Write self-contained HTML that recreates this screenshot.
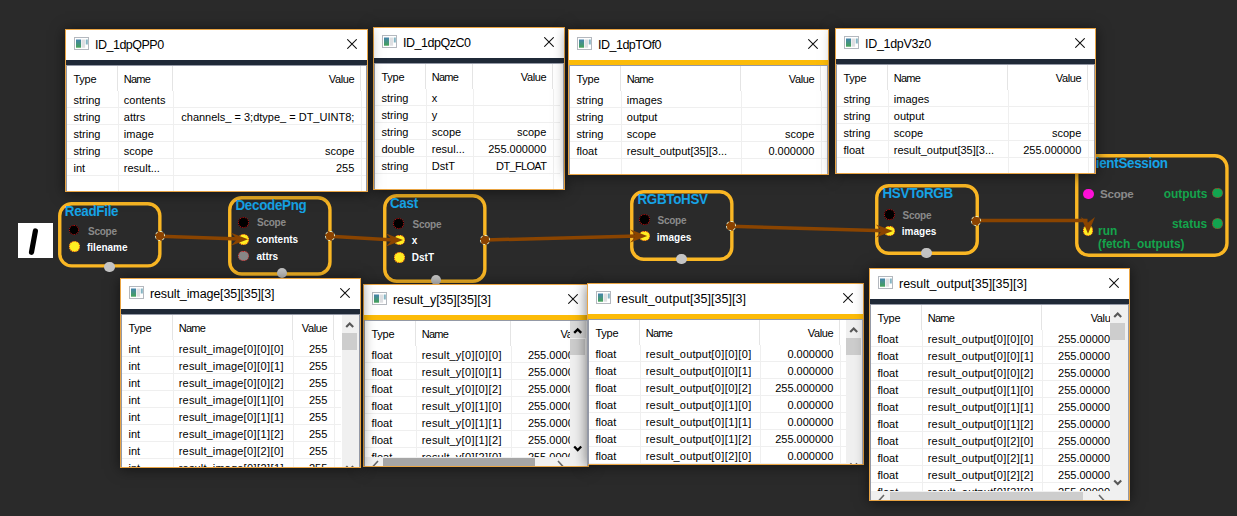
<!DOCTYPE html>
<html><head><meta charset="utf-8"><title>graph</title><style>
html,body{margin:0;padding:0;}
body{width:1237px;height:516px;background:#2a2a2a;overflow:hidden;position:relative;font-family:"Liberation Sans",sans-serif;}
.win{position:absolute;background:#fff;border:1px solid #e9a443;box-sizing:border-box;overflow:hidden;box-shadow:0 1px 13px rgba(0,0,0,0.55);}
.tb{position:absolute;left:0;top:0;right:0;height:30px;background:#fff;}
.ttl{position:absolute;left:29px;top:7.5px;font-size:12.5px;color:#000;white-space:nowrap;letter-spacing:-0.5px;}
.ico{position:absolute;left:8px;top:7px;width:15px;height:13px;}
.cls{position:absolute;right:10px;top:9px;width:10px;height:10px;}
.bar{position:absolute;left:0;right:0;top:30px;height:5px;}
.dk{background:#1f2937;}
.yl{background:#fcbb08;}
.tbl{position:absolute;left:0;top:35px;right:0;bottom:0;background:#fff;overflow:hidden;border-left:1px solid #9499a6;}
.vp{position:absolute;left:0;top:0;overflow:hidden;}
.c{position:absolute;font-size:11px;color:#000;white-space:nowrap;line-height:13px;}
.hl{position:absolute;height:1px;background:#efefef;left:0;}
.vl{position:absolute;width:1px;background:#efefef;}
.hv{position:absolute;width:1px;background:#e4e4e4;top:0;}
.sb{position:absolute;background:#f0f0f0;}
.th{position:absolute;background:#cdcdcd;}
.nt{position:absolute;font-weight:bold;font-size:13.4px;letter-spacing:-0.3px;color:#16a3e6;white-space:nowrap;line-height:15px;transform:scaleY(1.07);transform-origin:0 12.3px;}
.pl{position:absolute;font-weight:bold;font-size:10px;white-space:nowrap;line-height:12px;}
.pw{color:#fff;text-shadow:0 0 1px #123;}
.pg{color:#8a8a8a;letter-spacing:-0.25px;}
.gr{color:#14a44c;font-size:11.9px;line-height:13.4px;}
.dot{position:absolute;border-radius:50%;box-sizing:border-box;}
.d-k{background:#000;border:1px dotted #d01010;}
.d-y{background:#ffee22;border:1px dotted #e03a10;}
.d-g{background:#868686;border:1px dotted #d02020;}
.d-o{background:#8a4200;border:1.2px dashed #e4f0cc;}
.d-b{background:#c4c4c4;}
.d-m{background:#ff10d8;}
.d-gr{background:#12a550;border:1px dotted #b03020;}
</style></head><body>
<div style="position:absolute;left:18px;top:223px;width:35px;height:35px;background:#fff;"></div><svg style="position:absolute;left:18px;top:223px;" width="35" height="35"><path d="M17.4 8 L13.5 29.3" stroke="#000" stroke-width="5.2" stroke-linecap="round" fill="none"/></svg>
<svg style="position:absolute;left:1075.3px;top:154px;" width="153.70000000000005" height="103"><rect x="1.75" y="1.75" width="150.20000000000005" height="99.5" rx="12" ry="12" fill="none" stroke="#fab724" stroke-width="3.4"/></svg><div class="nt" style="left:1083px;top:156.20000000000002px;">ClientSession</div><div class="dot d-m" style="left:1083.2px;top:188.5px;width:10.6px;height:10.6px;"></div><div class="pl pg" style="font-size:11.6px;left:1100px;top:187px;line-height:14px;">Scope</div><div class="dot d-y" style="left:1082.8px;top:225.39999999999998px;width:10.6px;height:10.6px;"></div><div class="pl gr" style="left:1098px;top:224.9px;">run<br>(fetch_outputs)</div><div class="pl gr" style="left:1163.8px;top:187.7px;">outputs</div><div class="dot d-gr" style="left:1212.0px;top:187.79999999999998px;width:10.6px;height:10.6px;"></div><div class="pl gr" style="left:1172px;top:217.7px;">status</div><div class="dot d-gr" style="left:1212.0px;top:218.39999999999998px;width:10.6px;height:10.6px;"></div>
<svg style="position:absolute;left:58.4px;top:202.4px;" width="103.6" height="65.6"><rect x="1.75" y="1.75" width="100.1" height="62.099999999999994" rx="12" ry="12" fill="none" stroke="#fab724" stroke-width="3.4"/></svg><div class="nt" style="left:64.8px;top:203.9px;">ReadFile</div><div class="dot d-k" style="left:68.65px;top:224.65px;width:10.7px;height:10.7px;"></div><div class="pl pg" style="left:88px;top:225.6px;">Scope</div><div class="dot d-y" style="left:68.95px;top:241.45000000000002px;width:10.7px;height:10.7px;"></div><div class="pl pw" style="left:87px;top:241.9px;">filename</div><div class="dot d-b" style="left:104.3px;top:261.6px;width:10.4px;height:10.4px;"></div>
<svg style="position:absolute;left:228.3px;top:196.3px;" width="103.69999999999999" height="79.69999999999999"><rect x="1.75" y="1.75" width="100.19999999999999" height="76.19999999999999" rx="12" ry="12" fill="none" stroke="#fab724" stroke-width="3.4"/></svg><div class="nt" style="left:235.5px;top:198.0px;">DecodePng</div><div class="dot d-k" style="left:238.35px;top:217.05px;width:10.7px;height:10.7px;"></div><div class="pl pg" style="left:257px;top:217.29999999999998px;">Scope</div><div class="dot d-y" style="left:238.35px;top:233.85px;width:10.7px;height:10.7px;"></div><div class="pl pw" style="left:256.5px;top:234.1px;">contents</div><div class="dot d-g" style="left:238.35px;top:250.65px;width:10.7px;height:10.7px;"></div><div class="pl pw" style="left:256.5px;top:250.7px;">attrs</div><div class="dot d-b" style="left:276.6px;top:267.8px;width:10.4px;height:10.4px;"></div>
<svg style="position:absolute;left:383.4px;top:194px;" width="103.60000000000002" height="89"><rect x="1.75" y="1.75" width="100.10000000000002" height="85.5" rx="12" ry="12" fill="none" stroke="#fab724" stroke-width="3.4"/></svg><div class="nt" style="left:390px;top:195.9px;">Cast</div><div class="dot d-k" style="left:393.45px;top:217.85px;width:10.7px;height:10.7px;"></div><div class="pl pg" style="left:412.5px;top:218.7px;">Scope</div><div class="dot d-y" style="left:393.95px;top:234.65px;width:10.7px;height:10.7px;"></div><div class="pl pw" style="left:411.8px;top:235.4px;">x</div><div class="dot d-y" style="left:393.95px;top:251.95000000000002px;width:10.7px;height:10.7px;"></div><div class="pl pw" style="left:411.8px;top:252.4px;">DstT</div><div class="dot d-b" style="left:430.65000000000003px;top:274.85px;width:10.3px;height:10.3px;"></div>
<svg style="position:absolute;left:630.4px;top:190px;" width="103.60000000000002" height="71"><rect x="1.75" y="1.75" width="100.10000000000002" height="67.5" rx="12" ry="12" fill="none" stroke="#fab724" stroke-width="3.4"/></svg><div class="nt" style="left:637.5px;top:191.5px;">RGBToHSV</div><div class="dot d-k" style="left:638.9499999999999px;top:214.15px;width:10.7px;height:10.7px;"></div><div class="pl pg" style="left:657.5px;top:214.9px;">Scope</div><div class="dot d-y" style="left:639.4px;top:230.8px;width:10.4px;height:10.4px;"></div><div class="pl pw" style="left:656.8px;top:231.7px;">images</div><div class="dot d-b" style="left:676.1999999999999px;top:253.5px;width:10.4px;height:10.4px;"></div>
<svg style="position:absolute;left:875px;top:184px;" width="104" height="71"><rect x="1.75" y="1.75" width="100.5" height="67.5" rx="12" ry="12" fill="none" stroke="#fab724" stroke-width="3.4"/></svg><div class="nt" style="left:882.5px;top:185.9px;">HSVToRGB</div><div class="dot d-k" style="left:883.9499999999999px;top:208.85px;width:10.7px;height:10.7px;"></div><div class="pl pg" style="left:902.5px;top:209.6px;">Scope</div><div class="dot d-y" style="left:884.3px;top:225.70000000000002px;width:10.4px;height:10.4px;"></div><div class="pl pw" style="left:901.8px;top:226.2px;">images</div><div class="dot d-b" style="left:921.3px;top:248.10000000000002px;width:10.4px;height:10.4px;"></div>
<svg style="position:absolute;left:0;top:0;" width="1237" height="516"><g stroke="#8a4400" stroke-width="3.5" fill="none" stroke-linecap="butt"><path d="M160 236.3 L240 239"/><path d="M330 236.3 L394 240"/><path d="M485 240 L638 236"/><path d="M731 226.3 L885 230.8"/><path d="M976 220.5 L1087.5 220.5"/></g><path d="M231 232.7 L248 239.2 L231 245.7 L237 239.2 Z" fill="#8a4400"/><path d="M386 233.5 L403 240 L386 246.5 L392 240 Z" fill="#8a4400"/><path d="M630.2 229.5 L647.2 236 L630.2 242.5 L636.2 236 Z" fill="#8a4400"/><path d="M875.9 224.4 L892.9 230.9 L875.9 237.4 L881.9 230.9 Z" fill="#8a4400"/><path d="M1081 217 L1088 233.8 L1095 217 L1088 222.5 Z" fill="#8a4400"/></svg>
<div class="dot d-o" style="left:154.7px;top:231.4px;width:10px;height:10px;"></div><div class="dot d-o" style="left:325.0px;top:231.3px;width:10px;height:10px;"></div><div class="dot d-o" style="left:479.6px;top:235.0px;width:10px;height:10px;"></div><div class="dot d-o" style="left:726.3px;top:221.3px;width:10px;height:10px;"></div><div class="dot d-o" style="left:971.3px;top:215.5px;width:10px;height:10px;"></div>
<div class="win" style="left:373px;top:27px;width:192px;height:163px;"><div class="tb"><svg class="ico" viewBox="0 0 15 13"><defs><linearGradient id="ig" x1="0" y1="0" x2="0" y2="1"><stop offset="0" stop-color="#4583ad"/><stop offset="1" stop-color="#44a258"/></linearGradient></defs><rect x="0.5" y="0.5" width="14" height="12" fill="#fff" stroke="#b4b8be"/><rect x="2" y="2.5" width="5" height="8.2" fill="url(#ig)"/><rect x="7.5" y="2.5" width="3.6" height="8.2" fill="#dedfe2"/><rect x="11.8" y="2.5" width="2" height="5" fill="#86b5c4"/></svg><div class="ttl" style="letter-spacing:-0.48px;">ID_1dpQzC0</div><svg class="cls" viewBox="0 0 10 10"><path d="M0.3 0.3 L9.7 9.7 M9.7 0.3 L0.3 9.7" stroke="#111" stroke-width="1.05" fill="none"/></svg></div><div class="bar dk"></div><div class="tbl"><div style="position:absolute;left:0;right:0;top:0;height:1px;background:#9499a6;z-index:3;"></div><div style="position:absolute;right:0;top:0;bottom:0;width:1px;background:#9499a6;z-index:3;"></div><div class="vp" style="width:189px;height:126px;"><div class="c" style="left:6.5px;top:8px;"><span style="letter-spacing:-0.27px">Type</span></div><div class="c" style="left:56.8px;top:8px;"><span style="letter-spacing:-0.75px">Name</span></div><div class="c" style="left:-128.70000000000005px;width:300px;text-align:right;top:8px;"><span style="letter-spacing:-0.36px">Value</span></div><div class="hv" style="left:50px;height:26px;"></div><div class="vl" style="left:51px;top:26px;height:163px;"></div><div class="hv" style="left:97px;height:26px;"></div><div class="vl" style="left:98px;top:26px;height:163px;"></div><div class="hv" style="left:177px;height:26px;"></div><div class="vl" style="left:178px;top:26px;height:163px;"></div><div class="c" style="left:6.5px;top:29px;">string</div><div class="c" style="left:56.8px;top:29px;">x</div><div class="hl" style="top:42px;width:185px;"></div><div class="c" style="left:6.5px;top:46px;">string</div><div class="c" style="left:56.8px;top:46px;">y</div><div class="hl" style="top:59px;width:185px;"></div><div class="c" style="left:6.5px;top:63px;">string</div><div class="c" style="left:56.8px;top:63px;">scope</div><div class="c" style="left:-128.70000000000005px;width:300px;text-align:right;top:63px;">scope</div><div class="hl" style="top:76px;width:185px;"></div><div class="c" style="left:6.5px;top:80px;">double</div><div class="c" style="left:56.8px;top:80px;">resul...</div><div class="c" style="left:-128.70000000000005px;width:300px;text-align:right;top:80px;">255.000000</div><div class="hl" style="top:93px;width:185px;"></div><div class="c" style="left:6.5px;top:97px;">string</div><div class="c" style="left:56.8px;top:97px;">DstT</div><div class="c" style="left:-128.70000000000005px;width:300px;text-align:right;top:97px;"><span style="letter-spacing:-0.65px">DT_FLOAT</span></div><div class="hl" style="top:110px;width:185px;"></div><div class="c" style="left:6.5px;top:114px;"></div><div class="c" style="left:56.8px;top:114px;"></div><div class="hl" style="top:127px;width:185px;"></div></div></div></div>
<div class="win" style="left:65px;top:29px;width:303px;height:163px;"><div class="tb"><svg class="ico" viewBox="0 0 15 13"><rect x="0.5" y="0.5" width="14" height="12" fill="#fff" stroke="#b4b8be"/><rect x="2" y="2.5" width="5" height="8.2" fill="url(#ig)"/><rect x="7.5" y="2.5" width="3.6" height="8.2" fill="#dedfe2"/><rect x="11.8" y="2.5" width="2" height="5" fill="#86b5c4"/></svg><div class="ttl" style="letter-spacing:-0.5px;">ID_1dpQPP0</div><svg class="cls" viewBox="0 0 10 10"><path d="M0.3 0.3 L9.7 9.7 M9.7 0.3 L0.3 9.7" stroke="#111" stroke-width="1.05" fill="none"/></svg></div><div class="bar dk"></div><div class="tbl"><div style="position:absolute;left:0;right:0;top:0;height:1px;background:#9499a6;z-index:3;"></div><div style="position:absolute;right:0;top:0;bottom:0;width:1px;background:#9499a6;z-index:3;"></div><div class="vp" style="width:300px;height:126px;"><div class="c" style="left:6.5px;top:8px;"><span style="letter-spacing:-0.27px">Type</span></div><div class="c" style="left:56.8px;top:8px;"><span style="letter-spacing:-0.75px">Name</span></div><div class="c" style="left:-12.699999999999989px;width:300px;text-align:right;top:8px;"><span style="letter-spacing:-0.36px">Value</span></div><div class="hv" style="left:50px;height:26px;"></div><div class="vl" style="left:51px;top:26px;height:163px;"></div><div class="hv" style="left:105px;height:26px;"></div><div class="vl" style="left:106px;top:26px;height:163px;"></div><div class="hv" style="left:293px;height:26px;"></div><div class="vl" style="left:294px;top:26px;height:163px;"></div><div class="c" style="left:6.5px;top:29px;">string</div><div class="c" style="left:56.8px;top:29px;">contents</div><div class="hl" style="top:42px;width:301px;"></div><div class="c" style="left:6.5px;top:46px;">string</div><div class="c" style="left:56.8px;top:46px;">attrs</div><div class="c" style="left:-12.699999999999989px;width:300px;text-align:right;top:46px;">channels_ = 3;dtype_ = DT_UINT8;</div><div class="hl" style="top:59px;width:301px;"></div><div class="c" style="left:6.5px;top:63px;">string</div><div class="c" style="left:56.8px;top:63px;">image</div><div class="hl" style="top:76px;width:301px;"></div><div class="c" style="left:6.5px;top:80px;">string</div><div class="c" style="left:56.8px;top:80px;">scope</div><div class="c" style="left:-12.699999999999989px;width:300px;text-align:right;top:80px;">scope</div><div class="hl" style="top:93px;width:301px;"></div><div class="c" style="left:6.5px;top:97px;">int</div><div class="c" style="left:56.8px;top:97px;">result...</div><div class="c" style="left:-12.699999999999989px;width:300px;text-align:right;top:97px;">255</div><div class="hl" style="top:110px;width:301px;"></div><div class="c" style="left:6.5px;top:114px;"></div><div class="c" style="left:56.8px;top:114px;"></div><div class="hl" style="top:127px;width:301px;"></div></div></div></div>
<div class="win" style="left:568px;top:29px;width:261px;height:146px;"><div class="tb"><svg class="ico" viewBox="0 0 15 13"><rect x="0.5" y="0.5" width="14" height="12" fill="#fff" stroke="#b4b8be"/><rect x="2" y="2.5" width="5" height="8.2" fill="url(#ig)"/><rect x="7.5" y="2.5" width="3.6" height="8.2" fill="#dedfe2"/><rect x="11.8" y="2.5" width="2" height="5" fill="#86b5c4"/></svg><div class="ttl" style="letter-spacing:-0.5px;">ID_1dpTOf0</div><svg class="cls" viewBox="0 0 10 10"><path d="M0.3 0.3 L9.7 9.7 M9.7 0.3 L0.3 9.7" stroke="#111" stroke-width="1.05" fill="none"/></svg></div><div class="bar yl"></div><div class="tbl"><div style="position:absolute;left:0;right:0;top:0;height:1px;background:#9499a6;z-index:3;"></div><div style="position:absolute;right:0;top:0;bottom:0;width:1px;background:#9499a6;z-index:3;"></div><div class="vp" style="width:258px;height:109px;"><div class="c" style="left:6.5px;top:8px;"><span style="letter-spacing:-0.27px">Type</span></div><div class="c" style="left:56.8px;top:8px;"><span style="letter-spacing:-0.75px">Name</span></div><div class="c" style="left:-55.700000000000045px;width:300px;text-align:right;top:8px;"><span style="letter-spacing:-0.36px">Value</span></div><div class="hv" style="left:50px;height:26px;"></div><div class="vl" style="left:51px;top:26px;height:146px;"></div><div class="hv" style="left:170px;height:26px;"></div><div class="vl" style="left:171px;top:26px;height:146px;"></div><div class="hv" style="left:250px;height:26px;"></div><div class="vl" style="left:251px;top:26px;height:146px;"></div><div class="c" style="left:6.5px;top:29px;">string</div><div class="c" style="left:56.8px;top:29px;">images</div><div class="hl" style="top:42px;width:258px;"></div><div class="c" style="left:6.5px;top:46px;">string</div><div class="c" style="left:56.8px;top:46px;">output</div><div class="hl" style="top:59px;width:258px;"></div><div class="c" style="left:6.5px;top:63px;">string</div><div class="c" style="left:56.8px;top:63px;">scope</div><div class="c" style="left:-55.700000000000045px;width:300px;text-align:right;top:63px;">scope</div><div class="hl" style="top:76px;width:258px;"></div><div class="c" style="left:6.5px;top:80px;">float</div><div class="c" style="left:56.8px;top:80px;">result_output[35][3...</div><div class="c" style="left:-55.700000000000045px;width:300px;text-align:right;top:80px;">0.000000</div><div class="hl" style="top:93px;width:258px;"></div><div class="c" style="left:6.5px;top:97px;"></div><div class="c" style="left:56.8px;top:97px;"></div><div class="hl" style="top:110px;width:258px;"></div></div></div></div>
<div class="win" style="left:835px;top:28px;width:261px;height:146px;"><div class="tb"><svg class="ico" viewBox="0 0 15 13"><rect x="0.5" y="0.5" width="14" height="12" fill="#fff" stroke="#b4b8be"/><rect x="2" y="2.5" width="5" height="8.2" fill="url(#ig)"/><rect x="7.5" y="2.5" width="3.6" height="8.2" fill="#dedfe2"/><rect x="11.8" y="2.5" width="2" height="5" fill="#86b5c4"/></svg><div class="ttl" style="letter-spacing:-0.3px;">ID_1dpV3z0</div><svg class="cls" viewBox="0 0 10 10"><path d="M0.3 0.3 L9.7 9.7 M9.7 0.3 L0.3 9.7" stroke="#111" stroke-width="1.05" fill="none"/></svg></div><div class="bar dk"></div><div class="tbl"><div style="position:absolute;left:0;right:0;top:0;height:1px;background:#9499a6;z-index:3;"></div><div style="position:absolute;right:0;top:0;bottom:0;width:1px;background:#9499a6;z-index:3;"></div><div class="vp" style="width:258px;height:109px;"><div class="c" style="left:6.5px;top:8px;"><span style="letter-spacing:-0.27px">Type</span></div><div class="c" style="left:56.8px;top:8px;"><span style="letter-spacing:-0.75px">Name</span></div><div class="c" style="left:-55.700000000000045px;width:300px;text-align:right;top:8px;"><span style="letter-spacing:-0.36px">Value</span></div><div class="hv" style="left:50px;height:26px;"></div><div class="vl" style="left:51px;top:26px;height:146px;"></div><div class="hv" style="left:170px;height:26px;"></div><div class="vl" style="left:171px;top:26px;height:146px;"></div><div class="hv" style="left:250px;height:26px;"></div><div class="vl" style="left:251px;top:26px;height:146px;"></div><div class="c" style="left:6.5px;top:29px;">string</div><div class="c" style="left:56.8px;top:29px;">images</div><div class="hl" style="top:42px;width:258px;"></div><div class="c" style="left:6.5px;top:46px;">string</div><div class="c" style="left:56.8px;top:46px;">output</div><div class="hl" style="top:59px;width:258px;"></div><div class="c" style="left:6.5px;top:63px;">string</div><div class="c" style="left:56.8px;top:63px;">scope</div><div class="c" style="left:-55.700000000000045px;width:300px;text-align:right;top:63px;">scope</div><div class="hl" style="top:76px;width:258px;"></div><div class="c" style="left:6.5px;top:80px;">float</div><div class="c" style="left:56.8px;top:80px;">result_output[35][3...</div><div class="c" style="left:-55.700000000000045px;width:300px;text-align:right;top:80px;">255.000000</div><div class="hl" style="top:93px;width:258px;"></div><div class="c" style="left:6.5px;top:97px;"></div><div class="c" style="left:56.8px;top:97px;"></div><div class="hl" style="top:110px;width:258px;"></div></div></div></div>
<div class="win" style="left:363px;top:284px;width:226px;height:183px;"><div class="tb"><svg class="ico" viewBox="0 0 15 13"><rect x="0.5" y="0.5" width="14" height="12" fill="#fff" stroke="#b4b8be"/><rect x="2" y="2.5" width="5" height="8.2" fill="url(#ig)"/><rect x="7.5" y="2.5" width="3.6" height="8.2" fill="#dedfe2"/><rect x="11.8" y="2.5" width="2" height="5" fill="#86b5c4"/></svg><div class="ttl" style="letter-spacing:-0.08px;">result_y[35][35][3]</div><svg class="cls" viewBox="0 0 10 10"><path d="M0.3 0.3 L9.7 9.7 M9.7 0.3 L0.3 9.7" stroke="#111" stroke-width="1.05" fill="none"/></svg></div><div class="bar yl"></div><div class="tbl"><div style="position:absolute;left:0;right:0;top:0;height:1px;background:#9499a6;z-index:3;"></div><div style="position:absolute;right:0;top:0;bottom:0;width:1px;background:#9499a6;z-index:3;"></div><div class="vp" style="width:205px;height:137px;"><div class="c" style="left:6.5px;top:8px;"><span style="letter-spacing:-0.27px">Type</span></div><div class="c" style="left:56.8px;top:8px;"><span style="letter-spacing:-0.75px">Name</span></div><div class="c" style="left:-79px;width:300px;text-align:right;top:8px;"><span style="letter-spacing:-0.36px">Value</span></div><div class="hv" style="left:50px;height:26px;"></div><div class="vl" style="left:51px;top:26px;height:183px;"></div><div class="hv" style="left:145px;height:26px;"></div><div class="vl" style="left:146px;top:26px;height:183px;"></div><div class="hv" style="left:226px;height:26px;"></div><div class="vl" style="left:227px;top:26px;height:183px;"></div><div class="c" style="left:6.5px;top:29px;">float</div><div class="c" style="left:56.8px;top:29px;"><span style="letter-spacing:0.15px">result_y</span><span style="letter-spacing:0.42px">[0][0][0]</span></div><div class="c" style="left:-79px;width:300px;text-align:right;top:29px;">255.000000</div><div class="hl" style="top:42px;width:234px;"></div><div class="c" style="left:6.5px;top:46px;">float</div><div class="c" style="left:56.8px;top:46px;"><span style="letter-spacing:0.15px">result_y</span><span style="letter-spacing:0.42px">[0][0][1]</span></div><div class="c" style="left:-79px;width:300px;text-align:right;top:46px;">255.000000</div><div class="hl" style="top:59px;width:234px;"></div><div class="c" style="left:6.5px;top:63px;">float</div><div class="c" style="left:56.8px;top:63px;"><span style="letter-spacing:0.15px">result_y</span><span style="letter-spacing:0.42px">[0][0][2]</span></div><div class="c" style="left:-79px;width:300px;text-align:right;top:63px;">255.000000</div><div class="hl" style="top:76px;width:234px;"></div><div class="c" style="left:6.5px;top:80px;">float</div><div class="c" style="left:56.8px;top:80px;"><span style="letter-spacing:0.15px">result_y</span><span style="letter-spacing:0.42px">[0][1][0]</span></div><div class="c" style="left:-79px;width:300px;text-align:right;top:80px;">255.000000</div><div class="hl" style="top:93px;width:234px;"></div><div class="c" style="left:6.5px;top:97px;">float</div><div class="c" style="left:56.8px;top:97px;"><span style="letter-spacing:0.15px">result_y</span><span style="letter-spacing:0.42px">[0][1][1]</span></div><div class="c" style="left:-79px;width:300px;text-align:right;top:97px;">255.000000</div><div class="hl" style="top:110px;width:234px;"></div><div class="c" style="left:6.5px;top:114px;">float</div><div class="c" style="left:56.8px;top:114px;"><span style="letter-spacing:0.15px">result_y</span><span style="letter-spacing:0.42px">[0][1][2]</span></div><div class="c" style="left:-79px;width:300px;text-align:right;top:114px;">255.000000</div><div class="hl" style="top:127px;width:234px;"></div><div class="c" style="left:6.5px;top:131px;">float</div><div class="c" style="left:56.8px;top:131px;"><span style="letter-spacing:0.15px">result_y</span><span style="letter-spacing:0.42px">[0][2][0]</span></div><div class="c" style="left:-79px;width:300px;text-align:right;top:131px;">255.000000</div><div class="hl" style="top:144px;width:234px;"></div></div><div class="sb" style="left:205px;top:0;width:18px;height:137px;"><div style="position:absolute;left:0;width:16px;top:1px;height:17px;background:#dadada;"></div><div class="th" style="left:0;width:15px;top:19px;height:16px;"></div><svg style="position:absolute;left:0;top:0;" width="16" height="137"><path d="M4.2 12.9 L7.7 9.4 L11.2 12.9" stroke="#000" stroke-width="2.3" fill="none"/><path d="M4.2 126.5 L7.7 130.0 L11.2 126.5" stroke="#000" stroke-width="2.3" fill="none"/></svg></div><div class="sb" style="left:0;top:137px;width:223px;height:9px;"><div class="th" style="background:#a6a6a6;left:18px;width:152px;top:1px;bottom:0;"></div><svg style="position:absolute;left:0;top:0;" width="223" height="9"><path d="M13 4 L8 9.5 L13 15" stroke="#666" stroke-width="1.6" fill="none"/><path d="M193 4 L198 9.5 L193 15" stroke="#666" stroke-width="1.6" fill="none"/></svg></div></div></div>
<div class="win" style="left:120px;top:278px;width:241px;height:190px;"><div class="tb"><svg class="ico" viewBox="0 0 15 13"><rect x="0.5" y="0.5" width="14" height="12" fill="#fff" stroke="#b4b8be"/><rect x="2" y="2.5" width="5" height="8.2" fill="url(#ig)"/><rect x="7.5" y="2.5" width="3.6" height="8.2" fill="#dedfe2"/><rect x="11.8" y="2.5" width="2" height="5" fill="#86b5c4"/></svg><div class="ttl" style="letter-spacing:-0.12px;">result_image[35][35][3]</div><svg class="cls" viewBox="0 0 10 10"><path d="M0.3 0.3 L9.7 9.7 M9.7 0.3 L0.3 9.7" stroke="#111" stroke-width="1.05" fill="none"/></svg></div><div class="bar dk"></div><div class="tbl"><div style="position:absolute;left:0;right:0;top:0;height:1px;background:#9499a6;z-index:3;"></div><div style="position:absolute;right:0;top:0;bottom:0;width:1px;background:#9499a6;z-index:3;"></div><div class="vp" style="width:220px;height:153px;"><div class="c" style="left:6.5px;top:8px;"><span style="letter-spacing:-0.27px">Type</span></div><div class="c" style="left:56.8px;top:8px;"><span style="letter-spacing:-0.75px">Name</span></div><div class="c" style="left:-94.69999999999999px;width:300px;text-align:right;top:8px;"><span style="letter-spacing:-0.36px">Value</span></div><div class="hv" style="left:50px;height:26px;"></div><div class="vl" style="left:51px;top:26px;height:190px;"></div><div class="hv" style="left:170px;height:26px;"></div><div class="vl" style="left:171px;top:26px;height:190px;"></div><div class="hv" style="left:211px;height:26px;"></div><div class="vl" style="left:212px;top:26px;height:190px;"></div><div class="c" style="left:6.5px;top:29px;">int</div><div class="c" style="left:56.8px;top:29px;"><span style="letter-spacing:0.15px">result_image</span><span style="letter-spacing:0.42px">[0][0][0]</span></div><div class="c" style="left:-94.69999999999999px;width:300px;text-align:right;top:29px;">255</div><div class="hl" style="top:42px;width:219px;"></div><div class="c" style="left:6.5px;top:46px;">int</div><div class="c" style="left:56.8px;top:46px;"><span style="letter-spacing:0.15px">result_image</span><span style="letter-spacing:0.42px">[0][0][1]</span></div><div class="c" style="left:-94.69999999999999px;width:300px;text-align:right;top:46px;">255</div><div class="hl" style="top:59px;width:219px;"></div><div class="c" style="left:6.5px;top:63px;">int</div><div class="c" style="left:56.8px;top:63px;"><span style="letter-spacing:0.15px">result_image</span><span style="letter-spacing:0.42px">[0][0][2]</span></div><div class="c" style="left:-94.69999999999999px;width:300px;text-align:right;top:63px;">255</div><div class="hl" style="top:76px;width:219px;"></div><div class="c" style="left:6.5px;top:80px;">int</div><div class="c" style="left:56.8px;top:80px;"><span style="letter-spacing:0.15px">result_image</span><span style="letter-spacing:0.42px">[0][1][0]</span></div><div class="c" style="left:-94.69999999999999px;width:300px;text-align:right;top:80px;">255</div><div class="hl" style="top:93px;width:219px;"></div><div class="c" style="left:6.5px;top:97px;">int</div><div class="c" style="left:56.8px;top:97px;"><span style="letter-spacing:0.15px">result_image</span><span style="letter-spacing:0.42px">[0][1][1]</span></div><div class="c" style="left:-94.69999999999999px;width:300px;text-align:right;top:97px;">255</div><div class="hl" style="top:110px;width:219px;"></div><div class="c" style="left:6.5px;top:114px;">int</div><div class="c" style="left:56.8px;top:114px;"><span style="letter-spacing:0.15px">result_image</span><span style="letter-spacing:0.42px">[0][1][2]</span></div><div class="c" style="left:-94.69999999999999px;width:300px;text-align:right;top:114px;">255</div><div class="hl" style="top:127px;width:219px;"></div><div class="c" style="left:6.5px;top:131px;">int</div><div class="c" style="left:56.8px;top:131px;"><span style="letter-spacing:0.15px">result_image</span><span style="letter-spacing:0.42px">[0][2][0]</span></div><div class="c" style="left:-94.69999999999999px;width:300px;text-align:right;top:131px;">255</div><div class="hl" style="top:144px;width:219px;"></div><div class="c" style="left:6.5px;top:148px;">int</div><div class="c" style="left:56.8px;top:148px;"><span style="letter-spacing:0.15px">result_image</span><span style="letter-spacing:0.42px">[0][2][1]</span></div><div class="c" style="left:-94.69999999999999px;width:300px;text-align:right;top:148px;">255</div><div class="hl" style="top:161px;width:219px;"></div></div><div class="sb" style="left:220px;top:0;width:18px;height:153px;"><div class="th" style="left:0;width:15px;top:19px;height:17px;"></div><svg style="position:absolute;left:0;top:0;" width="16" height="153"><path d="M4.2 12.9 L7.7 9.4 L11.2 12.9" stroke="#585858" stroke-width="2.1" fill="none"/><path d="M4.2 152.25 L7.7 155.75 L11.2 152.25" stroke="#585858" stroke-width="2.1" fill="none"/></svg></div></div></div>
<div class="win" style="left:587px;top:283px;width:277px;height:182px;"><div class="tb"><svg class="ico" viewBox="0 0 15 13"><rect x="0.5" y="0.5" width="14" height="12" fill="#fff" stroke="#b4b8be"/><rect x="2" y="2.5" width="5" height="8.2" fill="url(#ig)"/><rect x="7.5" y="2.5" width="3.6" height="8.2" fill="#dedfe2"/><rect x="11.8" y="2.5" width="2" height="5" fill="#86b5c4"/></svg><div class="ttl" style="letter-spacing:0.05px;">result_output[35][35][3]</div><svg class="cls" viewBox="0 0 10 10"><path d="M0.3 0.3 L9.7 9.7 M9.7 0.3 L0.3 9.7" stroke="#111" stroke-width="1.05" fill="none"/></svg></div><div class="bar yl"></div><div class="tbl"><div style="position:absolute;left:0;right:0;top:0;height:1px;background:#9499a6;z-index:3;"></div><div style="position:absolute;right:0;top:0;bottom:0;width:1px;background:#9499a6;z-index:3;"></div><div class="vp" style="width:257px;height:145px;"><div class="c" style="left:6.5px;top:8px;"><span style="letter-spacing:-0.27px">Type</span></div><div class="c" style="left:56.8px;top:8px;"><span style="letter-spacing:-0.75px">Name</span></div><div class="c" style="left:-55.700000000000045px;width:300px;text-align:right;top:8px;"><span style="letter-spacing:-0.36px">Value</span></div><div class="hv" style="left:50px;height:26px;"></div><div class="vl" style="left:51px;top:26px;height:182px;"></div><div class="hv" style="left:170px;height:26px;"></div><div class="vl" style="left:171px;top:26px;height:182px;"></div><div class="hv" style="left:250px;height:26px;"></div><div class="vl" style="left:251px;top:26px;height:182px;"></div><div class="c" style="left:6.5px;top:29px;">float</div><div class="c" style="left:56.8px;top:29px;"><span style="letter-spacing:0.15px">result_output</span><span style="letter-spacing:0.42px">[0][0][0]</span></div><div class="c" style="left:-55.700000000000045px;width:300px;text-align:right;top:29px;">0.000000</div><div class="hl" style="top:42px;width:258px;"></div><div class="c" style="left:6.5px;top:46px;">float</div><div class="c" style="left:56.8px;top:46px;"><span style="letter-spacing:0.15px">result_output</span><span style="letter-spacing:0.42px">[0][0][1]</span></div><div class="c" style="left:-55.700000000000045px;width:300px;text-align:right;top:46px;">0.000000</div><div class="hl" style="top:59px;width:258px;"></div><div class="c" style="left:6.5px;top:63px;">float</div><div class="c" style="left:56.8px;top:63px;"><span style="letter-spacing:0.15px">result_output</span><span style="letter-spacing:0.42px">[0][0][2]</span></div><div class="c" style="left:-55.700000000000045px;width:300px;text-align:right;top:63px;">255.000000</div><div class="hl" style="top:76px;width:258px;"></div><div class="c" style="left:6.5px;top:80px;">float</div><div class="c" style="left:56.8px;top:80px;"><span style="letter-spacing:0.15px">result_output</span><span style="letter-spacing:0.42px">[0][1][0]</span></div><div class="c" style="left:-55.700000000000045px;width:300px;text-align:right;top:80px;">0.000000</div><div class="hl" style="top:93px;width:258px;"></div><div class="c" style="left:6.5px;top:97px;">float</div><div class="c" style="left:56.8px;top:97px;"><span style="letter-spacing:0.15px">result_output</span><span style="letter-spacing:0.42px">[0][1][1]</span></div><div class="c" style="left:-55.700000000000045px;width:300px;text-align:right;top:97px;">0.000000</div><div class="hl" style="top:110px;width:258px;"></div><div class="c" style="left:6.5px;top:114px;">float</div><div class="c" style="left:56.8px;top:114px;"><span style="letter-spacing:0.15px">result_output</span><span style="letter-spacing:0.42px">[0][1][2]</span></div><div class="c" style="left:-55.700000000000045px;width:300px;text-align:right;top:114px;">255.000000</div><div class="hl" style="top:127px;width:258px;"></div><div class="c" style="left:6.5px;top:131px;">float</div><div class="c" style="left:56.8px;top:131px;"><span style="letter-spacing:0.15px">result_output</span><span style="letter-spacing:0.42px">[0][2][0]</span></div><div class="c" style="left:-55.700000000000045px;width:300px;text-align:right;top:131px;">0.000000</div><div class="hl" style="top:144px;width:258px;"></div></div><div class="sb" style="left:257px;top:0;width:17px;height:145px;"><div class="th" style="left:0;width:15px;top:19px;height:17px;"></div><svg style="position:absolute;left:0;top:0;" width="16" height="145"><path d="M4.2 12.9 L7.7 9.4 L11.2 12.9" stroke="#585858" stroke-width="2.1" fill="none"/><path d="M4.2 144.55 L7.7 148.05 L11.2 144.55" stroke="#585858" stroke-width="2.1" fill="none"/></svg></div></div></div>
<div class="win" style="left:869px;top:268px;width:261px;height:233px;"><div class="tb"><svg class="ico" viewBox="0 0 15 13"><rect x="0.5" y="0.5" width="14" height="12" fill="#fff" stroke="#b4b8be"/><rect x="2" y="2.5" width="5" height="8.2" fill="url(#ig)"/><rect x="7.5" y="2.5" width="3.6" height="8.2" fill="#dedfe2"/><rect x="11.8" y="2.5" width="2" height="5" fill="#86b5c4"/></svg><div class="ttl" style="letter-spacing:0px;">result_output[35][35][3]</div><svg class="cls" viewBox="0 0 10 10"><path d="M0.3 0.3 L9.7 9.7 M9.7 0.3 L0.3 9.7" stroke="#111" stroke-width="1.05" fill="none"/></svg></div><div class="bar dk"></div><div class="tbl"><div style="position:absolute;left:0;right:0;top:0;height:1px;background:#9499a6;z-index:3;"></div><div style="position:absolute;right:0;top:0;bottom:0;width:1px;background:#9499a6;z-index:3;"></div><div class="vp" style="width:239px;height:187px;"><div class="c" style="left:6.5px;top:8px;"><span style="letter-spacing:-0.27px">Type</span></div><div class="c" style="left:56.8px;top:8px;"><span style="letter-spacing:-0.75px">Name</span></div><div class="c" style="left:-54.799999999999955px;width:300px;text-align:right;top:8px;"><span style="letter-spacing:-0.36px">Value</span></div><div class="hv" style="left:50px;height:26px;"></div><div class="vl" style="left:51px;top:26px;height:233px;"></div><div class="hv" style="left:170px;height:26px;"></div><div class="vl" style="left:171px;top:26px;height:233px;"></div><div class="hv" style="left:250px;height:26px;"></div><div class="vl" style="left:251px;top:26px;height:233px;"></div><div class="c" style="left:6.5px;top:29px;">float</div><div class="c" style="left:56.8px;top:29px;"><span style="letter-spacing:0.15px">result_output</span><span style="letter-spacing:0.42px">[0][0][0]</span></div><div class="c" style="left:-54.799999999999955px;width:300px;text-align:right;top:29px;">255.000000</div><div class="hl" style="top:42px;width:258px;"></div><div class="c" style="left:6.5px;top:46px;">float</div><div class="c" style="left:56.8px;top:46px;"><span style="letter-spacing:0.15px">result_output</span><span style="letter-spacing:0.42px">[0][0][1]</span></div><div class="c" style="left:-54.799999999999955px;width:300px;text-align:right;top:46px;">255.000000</div><div class="hl" style="top:59px;width:258px;"></div><div class="c" style="left:6.5px;top:63px;">float</div><div class="c" style="left:56.8px;top:63px;"><span style="letter-spacing:0.15px">result_output</span><span style="letter-spacing:0.42px">[0][0][2]</span></div><div class="c" style="left:-54.799999999999955px;width:300px;text-align:right;top:63px;">255.000000</div><div class="hl" style="top:76px;width:258px;"></div><div class="c" style="left:6.5px;top:80px;">float</div><div class="c" style="left:56.8px;top:80px;"><span style="letter-spacing:0.15px">result_output</span><span style="letter-spacing:0.42px">[0][1][0]</span></div><div class="c" style="left:-54.799999999999955px;width:300px;text-align:right;top:80px;">255.000000</div><div class="hl" style="top:93px;width:258px;"></div><div class="c" style="left:6.5px;top:97px;">float</div><div class="c" style="left:56.8px;top:97px;"><span style="letter-spacing:0.15px">result_output</span><span style="letter-spacing:0.42px">[0][1][1]</span></div><div class="c" style="left:-54.799999999999955px;width:300px;text-align:right;top:97px;">255.000000</div><div class="hl" style="top:110px;width:258px;"></div><div class="c" style="left:6.5px;top:114px;">float</div><div class="c" style="left:56.8px;top:114px;"><span style="letter-spacing:0.15px">result_output</span><span style="letter-spacing:0.42px">[0][1][2]</span></div><div class="c" style="left:-54.799999999999955px;width:300px;text-align:right;top:114px;">255.000000</div><div class="hl" style="top:127px;width:258px;"></div><div class="c" style="left:6.5px;top:131px;">float</div><div class="c" style="left:56.8px;top:131px;"><span style="letter-spacing:0.15px">result_output</span><span style="letter-spacing:0.42px">[0][2][0]</span></div><div class="c" style="left:-54.799999999999955px;width:300px;text-align:right;top:131px;">255.000000</div><div class="hl" style="top:144px;width:258px;"></div><div class="c" style="left:6.5px;top:148px;">float</div><div class="c" style="left:56.8px;top:148px;"><span style="letter-spacing:0.15px">result_output</span><span style="letter-spacing:0.42px">[0][2][1]</span></div><div class="c" style="left:-54.799999999999955px;width:300px;text-align:right;top:148px;">255.000000</div><div class="hl" style="top:161px;width:258px;"></div><div class="c" style="left:6.5px;top:165px;">float</div><div class="c" style="left:56.8px;top:165px;"><span style="letter-spacing:0.15px">result_output</span><span style="letter-spacing:0.42px">[0][2][2]</span></div><div class="c" style="left:-54.799999999999955px;width:300px;text-align:right;top:165px;">255.000000</div><div class="hl" style="top:178px;width:258px;"></div><div class="c" style="left:6.5px;top:182px;">float</div><div class="c" style="left:56.8px;top:182px;"><span style="letter-spacing:0.15px">result_output</span><span style="letter-spacing:0.42px">[0][3][0]</span></div><div class="c" style="left:-54.799999999999955px;width:300px;text-align:right;top:182px;">255.000000</div><div class="hl" style="top:195px;width:258px;"></div></div><div class="sb" style="left:239px;top:0;width:19px;height:187px;"><div class="th" style="left:0;width:15px;top:19px;height:17px;"></div><svg style="position:absolute;left:0;top:0;" width="16" height="187"><path d="M4.2 12.9 L7.7 9.4 L11.2 12.9" stroke="#585858" stroke-width="2.1" fill="none"/><path d="M4.2 176.5 L7.7 180.0 L11.2 176.5" stroke="#585858" stroke-width="2.1" fill="none"/></svg></div><div class="sb" style="left:0;top:187px;width:258px;height:9px;"><div class="th" style="background:#cdcdcd;left:19px;width:193px;top:1px;bottom:0;"></div><svg style="position:absolute;left:0;top:0;" width="258" height="9"><path d="M13 4 L8 9.5 L13 15" stroke="#666" stroke-width="1.6" fill="none"/><path d="M228 4 L233 9.5 L228 15" stroke="#666" stroke-width="1.6" fill="none"/></svg></div></div></div>
</body></html>
